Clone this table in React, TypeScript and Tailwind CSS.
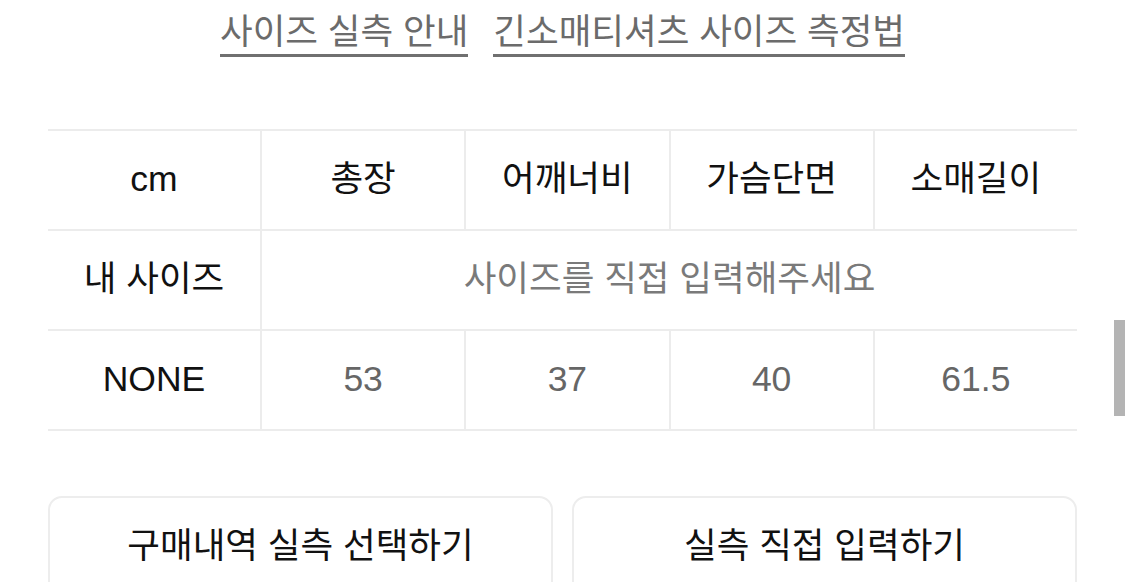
const font = "font-['Liberation_Sans','Noto_Sans_CJK_KR',sans-serif]";

const headers = ["총장", "어깨너비", "가슴단면", "소매길이"];
const values = ["53", "37", "40", "61.5"];

function Cell({ children, className = "" }: { children: React.ReactNode; className?: string }) {
  return (
    <div className={`flex h-[100px] items-center justify-center border-t-2 border-[#ececec] ${className}`}>
      {children}
    </div>
  );
}

export default function App() {
  return (
    <div className={`relative h-[582px] w-[1125px] overflow-hidden bg-white ${font}`}>
      <div className="flex justify-center gap-[25px] pt-[13px] text-[35.5px] leading-[38px] text-[#6b6b6b]">
        <span className="border-b-[3px] border-[#707070] pb-[3px]">사이즈 실측 안내</span>
        <span className="border-b-[3px] border-[#707070] pb-[3px]">긴소매티셔츠 사이즈 측정법</span>
      </div>

      <div className="mx-[48px] mt-[72px] grid grid-cols-[212px_repeat(4,1fr)] border-b-2 border-[#ececec] text-[35.5px]">
        <Cell className="text-[#111]">cm</Cell>
        {headers.map((h) => (
          <Cell key={h} className="border-l-2 text-[#111]">
            {h}
          </Cell>
        ))}

        <Cell className="text-[#111]">내 사이즈</Cell>
        <Cell className="col-span-4 border-l-2 text-[#7a7a7a]">사이즈를 직접 입력해주세요</Cell>

        <Cell className="text-[#111]">NONE</Cell>
        {values.map((v) => (
          <Cell key={v} className="border-l-2 text-[#666]">
            {v}
          </Cell>
        ))}
      </div>

      <div className="mx-[48px] mt-[65px] grid grid-cols-2 gap-[19px]">
        <button className="h-[110px] rounded-[14px] border-2 border-[#ededed] pb-[8px] text-[35.5px] text-[#111]">
          구매내역 실측 선택하기
        </button>
        <button className="h-[110px] rounded-[14px] border-2 border-[#ededed] pb-[8px] text-[35.5px] text-[#111]">
          실측 직접 입력하기
        </button>
      </div>

      <div className="absolute right-0 top-[320px] h-[96px] w-[11px] bg-[#b4b4b4]" />
    </div>
  );
}
